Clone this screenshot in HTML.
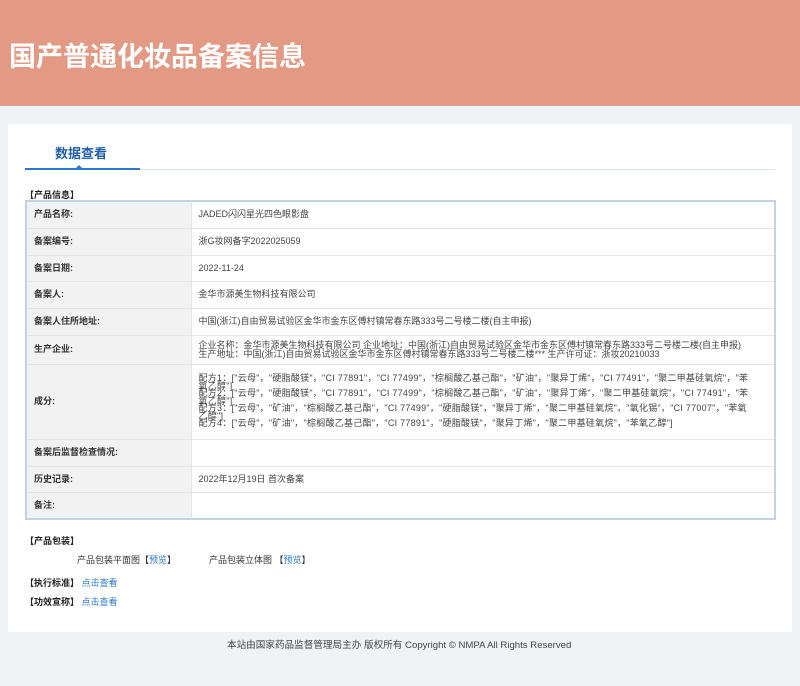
<!DOCTYPE html>
<html><head><meta charset="utf-8"><style>
*{margin:0;padding:0;box-sizing:border-box}
body{width:800px;height:686px;background:#f0f3f6;font-family:"Liberation Sans","Noto Sans CJK SC",sans-serif;font-size:9px;color:#333;position:relative;overflow:hidden}
.hd{position:absolute;left:0;top:0;width:800px;height:106px;background:#e39a85}
.hd h1{position:absolute;left:9px;top:40px;font-size:27px;line-height:34px;color:#fff;font-weight:bold}
.panel{position:absolute;left:8px;top:124px;width:784px;height:508px;background:#fff}
.tab{position:absolute;left:55px;top:143px;font-size:13px;font-weight:bold;color:#1f5ea8}
.line{position:absolute;left:25px;top:169px;width:750px;height:1px;background:#dde3ea}
.line2{position:absolute;left:25px;top:168px;width:115px;height:2px;background:#2b7ad0}
.tri{position:absolute;left:75px;top:165px;width:0;height:0;border-left:4px solid transparent;border-right:4px solid transparent;border-bottom:4px solid #2b7ad0}
.sec{position:absolute;left:25px;font-weight:bold;color:#222;font-size:9px}
table{position:absolute;left:25px;top:200px;width:751px;border-collapse:collapse;border:2px solid #c2d2e8}
td{border-bottom:1px solid #e6e6e6;padding:0 7px;vertical-align:middle;line-height:9px}
td.l{width:165px;background:#f2f2f2;font-weight:bold;color:#333;border-right:1px solid #e6e6e6}
td.v{color:#444}
.a{color:#2b7ad0}
.ing div{height:7.6px;line-height:7.6px;white-space:nowrap;letter-spacing:0.25px;overflow:visible}
</style></head><body>
<div class="hd"><h1>国产普通化妆品备案信息</h1></div>
<div class="panel"></div>
<div class="tab">数据查看</div>
<div class="line"></div><div class="line2"></div><div class="tri"></div>
<div class="sec" style="top:188px">【产品信息】</div>
<table>
<tr style="height:27px"><td class="l">产品名称:</td><td class="v">JADED闪闪星光四色眼影盘</td></tr>
<tr style="height:27px"><td class="l">备案编号:</td><td class="v">浙G妆网备字2022025059</td></tr>
<tr style="height:26px"><td class="l">备案日期:</td><td class="v">2022-11-24</td></tr>
<tr style="height:27px"><td class="l">备案人:</td><td class="v">金华市源美生物科技有限公司</td></tr>
<tr style="height:27px"><td class="l">备案人住所地址:</td><td class="v">中国(浙江)自由贸易试验区金华市金东区傅村镇常春东路333号二号楼二楼(自主申报)</td></tr>
<tr style="height:29px"><td class="l">生产企业:</td><td class="v" style="line-height:9px;white-space:nowrap">企业名称：金华市源美生物科技有限公司 企业地址：中国(浙江)自由贸易试验区金华市金东区傅村镇常春东路333号二号楼二楼(自主申报)<br>生产地址：中国(浙江)自由贸易试验区金华市金东区傅村镇常春东路333号二号楼二楼*** 生产许可证：浙妆20210033</td></tr>
<tr style="height:75px"><td class="l">成分:</td><td class="v ing">
<div>配方1：["云母"，"硬脂酸镁"，"CI 77891"，"CI 77499"，"棕榈酸乙基己酯"，"矿油"，"聚异丁烯"，"CI 77491"，"聚二甲基硅氧烷"，"苯</div>
<div>氧乙醇"]</div>
<div>配方2：["云母"，"硬脂酸镁"，"CI 77891"，"CI 77499"，"棕榈酸乙基己酯"，"矿油"，"聚异丁烯"，"聚二甲基硅氧烷"，"CI 77491"，"苯</div>
<div>氧乙醇"]</div>
<div>配方3：["云母"，"矿油"，"棕榈酸乙基己酯"，"CI 77499"，"硬脂酸镁"，"聚异丁烯"，"聚二甲基硅氧烷"，"氧化锡"，"CI 77007"，"苯氧</div>
<div>乙醇"]</div>
<div>配方4：["云母"，"矿油"，"棕榈酸乙基己酯"，"CI 77891"，"硬脂酸镁"，"聚异丁烯"，"聚二甲基硅氧烷"，"苯氧乙醇"]</div>
</td></tr>
<tr style="height:27px"><td class="l">备案后监督检查情况:</td><td class="v"></td></tr>
<tr style="height:26px"><td class="l">历史记录:</td><td class="v">2022年12月19日 首次备案</td></tr>
<tr style="height:27px"><td class="l">备注:</td><td class="v"></td></tr>
</table>
<div class="sec" style="top:534px">【产品包装】</div>
<div style="position:absolute;left:77px;top:553px">产品包装平面图【<span class="a">预览</span>】</div>
<div style="position:absolute;left:209px;top:553px">产品包装立体图 【<span class="a">预览</span>】</div>
<div class="sec" style="top:576px">【执行标准】 <span class="a" style="font-weight:normal">点击查看</span></div>
<div class="sec" style="top:595px">【功效宣称】 <span class="a" style="font-weight:normal">点击查看</span></div>
<div style="position:absolute;left:227px;top:637px;color:#444;font-size:9.6px;white-space:nowrap">本站由国家药品监督管理局主办 版权所有 Copyright © NMPA All Rights Reserved</div>
</body></html>
